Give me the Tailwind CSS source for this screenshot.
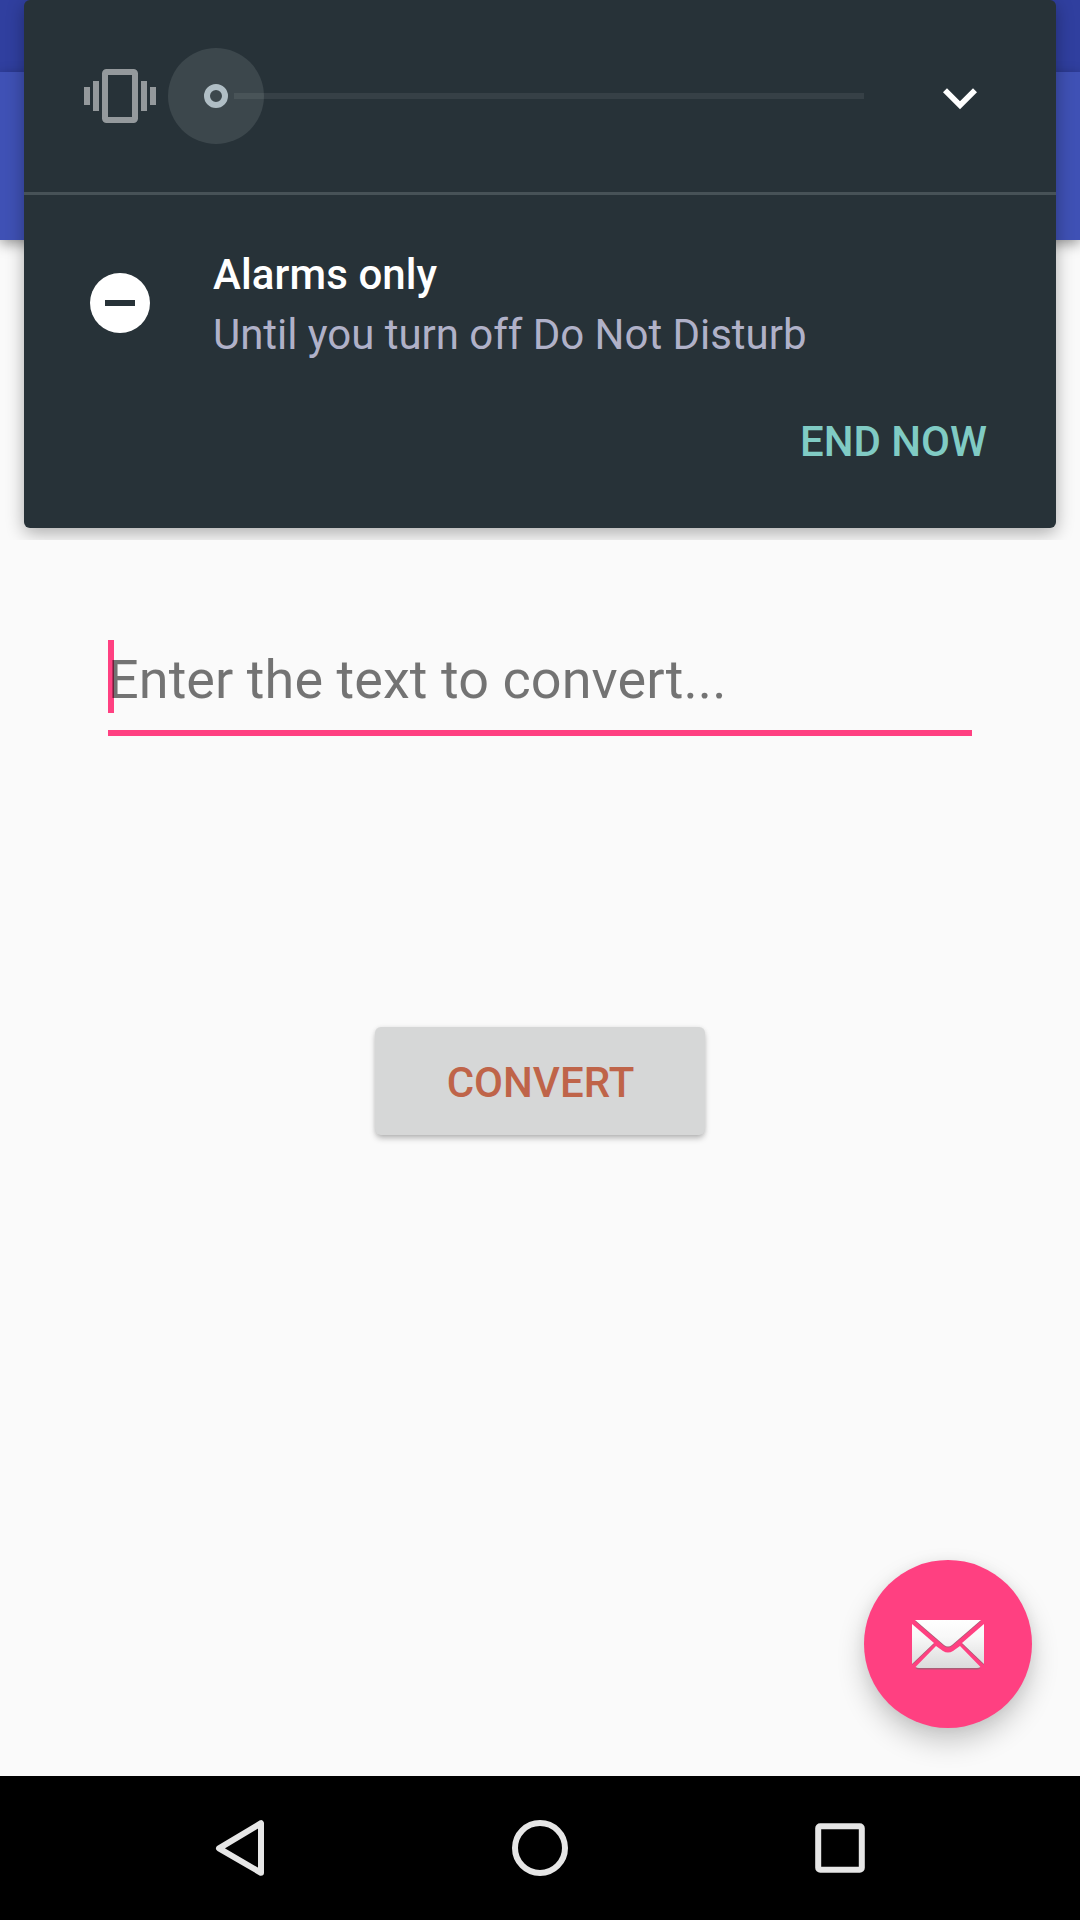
<!DOCTYPE html>
<html lang="en">
<head>
<meta charset="utf-8">
<title>Convert</title>
<script src="https://cdn.jsdelivr.net/npm/@tailwindcss/browser@4"></script>
</head>
<body class="relative flex h-[1920px] w-[1080px] flex-col overflow-hidden bg-[#fafafa] font-['Roboto',sans-serif]">
  <!-- Status bar and app bar -->
  <div class="h-[72px] shrink-0 bg-[#303f9f]"></div>
  <header class="z-0 h-[168px] shrink-0 bg-[#3f51b5] shadow-[0_4px_12px_rgba(0,0,0,0.38)]"></header>

  <main class="flex grow flex-col items-center pt-[400px]">
    <div class="flex h-[96px] w-[864px] items-start border-b-[6px] border-[#ff4081]">
      <div class="h-[73px] w-[6px] bg-[#ff4081]"></div>
      <div class="-ml-1.5 pt-1 text-[54px] leading-[72px] tracking-[0.06px] whitespace-nowrap text-black/54">Enter the text to convert...</div>
    </div>
    <button class="mt-[291px] flex h-[108px] w-[330px] justify-center rounded-[6px] bg-[#d6d7d7] pt-[26px] pl-[1px] text-[42px] leading-[60px] font-medium text-[#bf6449] shadow-[0_4px_6px_-1px_rgba(0,0,0,0.28),0_0_4px_rgba(0,0,0,0.08)]">CONVERT</button>
    <div class="mt-auto mr-12 mb-12 flex size-[168px] items-center justify-center self-end rounded-full bg-[#ff4081] shadow-[0_14px_28px_rgba(0,0,0,0.2),0_2px_14px_rgba(0,0,0,0.06)]">
      <svg class="mt-0.5 h-[50px] w-[72px]" viewBox="0 0 72 50">
        <defs>
          <linearGradient id="paper" gradientUnits="userSpaceOnUse" x1="0" y1="0" x2="0" y2="49">
            <stop offset="0" stop-color="#ffffff"/><stop offset=".35" stop-color="#f8f8f8"/><stop offset="1" stop-color="#dadada"/>
          </linearGradient>
        </defs>
        <g fill="#8f6672" opacity=".75" transform="translate(0 1)">
          <path d="M3 0H69L40 25Q36 28 32 25Z"/><path d="M0 4L22 23L0 44Z"/><path d="M72 4L50 23L72 44Z"/><path d="M3.5 47L24 26L31 31Q36 34 41 31L48 26L68.500 47Q67 48.500 65 48.500H7Q5 48.500 3.500 47Z"/>
        </g>
        <g fill="url(#paper)">
          <path d="M3 0H69L40 25Q36 28 32 25Z"/><path d="M0 4L22 23L0 44Z"/><path d="M72 4L50 23L72 44Z"/><path d="M3.5 47L24 26L31 31Q36 34 41 31L48 26L68.500 47Q67 48 65 48H7Q5 48 3.500 47Z"/>
        </g>
      </svg>
    </div>
  </main>

  <!-- Navigation bar -->
  <nav class="grid h-[144px] shrink-0 grid-cols-3 place-items-center bg-black px-[90px]">
    <svg class="size-[72px]" viewBox="0 0 72 72" fill="none" stroke="#e6e6e6" stroke-width="6" stroke-linejoin="round"><path d="M57 11.200V60.800L15 36.300Z"/></svg>
    <svg class="size-[72px]" viewBox="0 0 72 72" fill="none" stroke="#e6e6e6" stroke-width="6"><circle cx="36" cy="36" r="25"/></svg>
    <svg class="size-[72px]" viewBox="0 0 72 72" fill="none" stroke="#e6e6e6" stroke-width="6"><rect x="14.200" y="14.200" width="43.600" height="43.600" rx="2"/></svg>
  </nav>

  <!-- Volume panel over the app; its shadow is cut at the window's lower edge -->
  <div class="absolute inset-x-0 top-0 z-10 h-[540px] overflow-hidden px-6">
    <section class="h-[528px] rounded-[6px] bg-[#273238] shadow-[0_5px_18px_rgba(0,0,0,0.32)]">
      <div class="flex h-[195px] items-center border-b-[3px] border-[#475257]">
        <svg class="ml-[60px] size-[72px]" viewBox="0 0 72 72" fill="#94999c">
          <rect x="21" y="12" width="30" height="48" rx="1.500" fill="none" stroke="#94999c" stroke-width="6"/>
          <path d="M0 27h6v18H0zM9 21h6v30H9zM57 21h6v30h-6zM66 27h6v18h-6z"/>
        </svg>
        <svg class="ml-3 h-24 w-[696px]" viewBox="0 0 696 96">
          <circle cx="48" cy="48" r="48" fill="#3c474c"/>
          <path d="M66 45H696V51H66Z" fill="#fff" fill-opacity=".07"/>
          <circle cx="48" cy="48" r="9" fill="none" stroke="#b0bec5" stroke-width="6"/>
        </svg>
        <svg class="mt-[4px] ml-[62px] size-[68px]" viewBox="0 0 24 24" fill="#fff"><path d="M16.590 8.590L12 13.170 7.410 8.590 6 10l6 6 6-6z"/></svg>
      </div>
      <div class="flex pt-[50px] pl-[66px]">
        <svg class="mt-7 size-[60px]" viewBox="0 0 60 60"><circle cx="30" cy="30" r="30" fill="#fff"/><path d="M15 27h30v6H15z" fill="#273238"/></svg>
        <div class="ml-[63px] text-[42px] leading-[60px] whitespace-nowrap">
          <div class="font-medium tracking-[0.1px] text-white">Alarms only</div>
          <div class="tracking-[-0.035px] text-[#b0b1c8]">Until you turn off Do Not Disturb</div>
        </div>
      </div>
      <div class="mt-[47px] pr-[69px] text-right text-[42px] leading-[60px] font-medium text-[#80cbc4]">END NOW</div>
    </section>
  </div>
</body>
</html>
